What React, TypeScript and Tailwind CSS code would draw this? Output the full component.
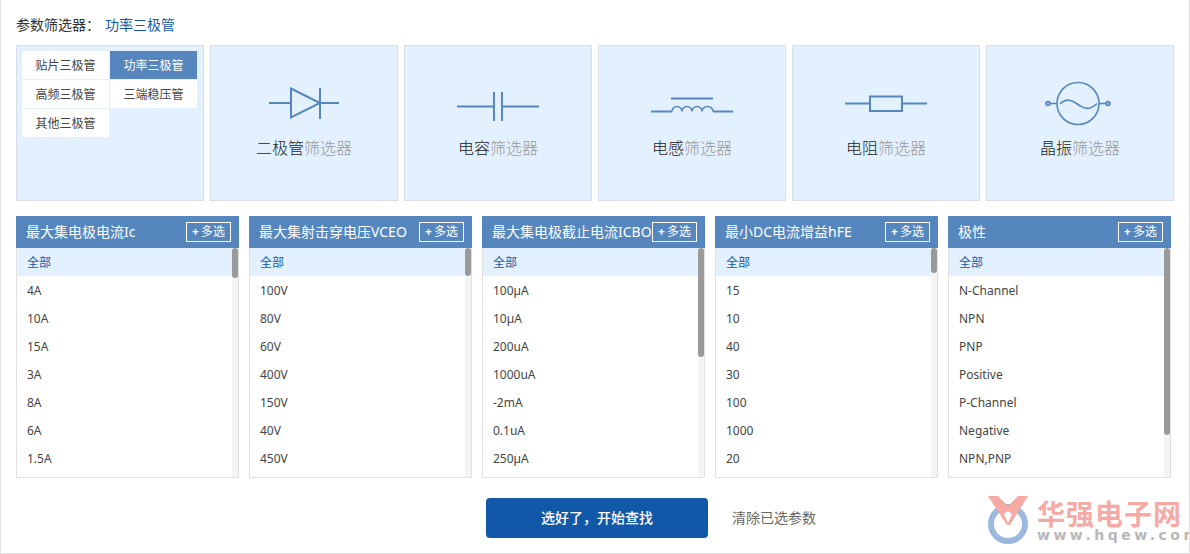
const subTypes = ['贴片三极管', '功率三极管', '高频三极管', '三端稳压管', '其他三极管'];

const filters = [
  { title: '最大集电极电流Ic', thumb: 'h-[30px]', items: ['4A', '10A', '15A', '3A', '8A', '6A', '1.5A'] },
  { title: '最大集射击穿电压VCEO', thumb: 'h-[28px]', items: ['100V', '80V', '60V', '400V', '150V', '40V', '450V'] },
  { title: '最大集电极截止电流ICBO', thumb: 'h-[109px]', items: ['100µA', '10µA', '200uA', '1000uA', '-2mA', '0.1uA', '250µA'] },
  { title: '最小DC电流增益hFE', thumb: 'h-[25px]', items: ['15', '10', '40', '30', '100', '1000', '20'] },
  { title: '极性', thumb: 'h-[187px]', items: ['N-Channel', 'NPN', 'PNP', 'Positive', 'P-Channel', 'Negative', 'NPN,PNP'] },
];

function Diode() {
  return (
    <g fill="none" stroke="#5586be" strokeWidth="2">
      <path d="M58 27H80" />
      <path d="M80 12.5L109 27L80 41.5Z" />
      <path d="M109 12V43" />
      <path d="M109 27H128" />
    </g>
  );
}

function Capacitor() {
  return (
    <g fill="none" stroke="#5586be" strokeWidth="2">
      <path d="M52 30.5H89" />
      <path d="M89 16V45" />
      <path d="M97 16V45" />
      <path d="M97 30.5H134" />
    </g>
  );
}

function Inductor() {
  return (
    <g fill="none" stroke="#5586be" strokeWidth="2">
      <path d="M52 35.5H73" />
      <path d="M72 22.5H114" />
      <path d="M73 35.5a5 5 0 0 1 10 0a5 5 0 0 1 10 0a5 5 0 0 1 10 0a5.5 5 0 0 1 11 0" strokeWidth="1.6" />
      <path d="M114 35.5H134" />
    </g>
  );
}

function Resistor() {
  return (
    <g fill="none" stroke="#5586be" strokeWidth="2">
      <path d="M52 27.5H77" />
      <rect x="77" y="20.5" width="32" height="14.5" />
      <path d="M109 27.5H134" />
    </g>
  );
}

function Crystal() {
  return (
    <g fill="none" stroke="#5586be" strokeWidth="1.6">
      <circle cx="91" cy="27.5" r="21" />
      <circle cx="61" cy="27.5" r="2" fill="#5586be" fillOpacity="0.5" />
      <circle cx="121" cy="27.5" r="2" fill="#5586be" fillOpacity="0.5" />
      <path d="M63 27.5H70" />
      <path d="M112 27.5H119" />
      <path d="M73 28c5-5 10-5 15-1.500s10 7 15 5.500c3-1 5-2.500 7-4.500" />
    </g>
  );
}

const tiles = [
  { name: '二极管', icon: <Diode /> },
  { name: '电容', icon: <Capacitor /> },
  { name: '电感', icon: <Inductor /> },
  { name: '电阻', icon: <Resistor /> },
  { name: '晶振', icon: <Crystal /> },
];

export default function App() {
  return (
    <div className="relative h-[554px] w-[1190px] overflow-hidden border-x border-b border-[#e0e0e0] bg-white pl-[15px] font-['Noto_Sans','Noto_Sans_CJK_SC',sans-serif] text-[#333]">
      {/* Heading */}
      <div className="flex h-[45px] items-center pt-[4px] text-[14px]">
        <span>参数筛选器：</span>
        <span className="ml-[5px] text-[#1258a8]">功率三极管</span>
      </div>

      {/* Category tiles */}
      <div className="flex gap-[6px]">
        <div className="h-[156px] w-[188px] border border-[#d8dfe8] bg-[#e3f1ff] p-[5px]">
          <div className="grid grid-cols-[87px_87px] gap-px">
            {subTypes.map((s) => (
              <div
                key={s}
                className={
                  s === '功率三极管'
                    ? 'flex h-[28px] items-center justify-center bg-[#5586be] pt-[2px] text-[12px] text-white'
                    : 'flex h-[28px] items-center justify-center bg-white pt-[2px] text-[12px] text-[#444]'
                }
              >
                {s}
              </div>
            ))}
          </div>
        </div>
        {tiles.map((t) => (
          <div key={t.name} className="h-[156px] w-[188px] border border-[#d8dfe8] bg-[#e3f1ff] pt-[30px]">
            <svg width="186" height="60" viewBox="0 0 186 60" className="block">
              {t.icon}
            </svg>
            <div className="text-center text-[16px] font-light leading-6">
              <span className="text-[#222]">{t.name}</span>
              <span className="text-[#999]">筛选器</span>
            </div>
          </div>
        ))}
      </div>

      {/* Parameter columns */}
      <div className="mt-[15px] flex gap-[10px]">
        {filters.map((f) => (
          <div key={f.title} className="w-[223px]">
            <div className="flex h-[32px] items-center justify-between bg-[#5586be] pl-[10px] pr-[8px] text-white">
              <span className="whitespace-nowrap text-[14px] leading-5">{f.title}</span>
              <span className="flex h-[20px] w-[45px] shrink-0 items-center justify-center gap-[2px] border border-white text-[12px] leading-none">
                <span className="text-[12px] font-bold">+</span>多选
              </span>
            </div>
            <div className="flex h-[230px] border-x border-b border-[#e0e0e0]">
              <div className="min-w-0 flex-1 overflow-hidden">
                <div className="flex h-[28px] items-center bg-[#e3f1ff] pl-[10px] pt-[2px] text-[12px] text-[#1258a8]">全部</div>
                {f.items.map((item) => (
                  <div key={item} className="flex h-[28px] items-center pl-[10px] pt-[2px] text-[12px] text-[#444]">
                    {item}
                  </div>
                ))}
              </div>
              <div className="w-[6px] bg-[#f4f4f4]">
                <div className={`${f.thumb} w-[6px] rounded-[3px] bg-[#9a9a9a]`} />
              </div>
            </div>
          </div>
        ))}
      </div>

      {/* Actions */}
      <div className="mt-[20px] flex items-center">
        <button className="ml-[470px] h-[40px] w-[222px] rounded bg-[#1258a8] pb-[2px] text-[14px] font-medium text-white">
          选好了，开始查找
        </button>
        <span className="ml-[24px] pb-[2px] text-[14px] text-[#666]">清除已选参数</span>
      </div>

      {/* Watermark logo */}
      <div className="absolute bottom-[4px] left-[986px] flex w-[203px] items-start gap-[6px]">
        <svg width="44" height="50" viewBox="0 0 44 50" className="mb-[4px] block shrink-0">
          <circle cx="21" cy="29" r="17" fill="none" stroke="#9cb8dc" strokeWidth="6" />
          <path d="M21 43V49" stroke="#9cb8dc" strokeWidth="6" />
          <path d="M1 1H11L21 11L31 1H41L23 30H20Z" fill="#f5aaa6" />
          <path d="M21 16L17 19L21 28L25 19Z" fill="#ffffff" />
        </svg>
        <div className="mt-[5px] flex flex-col">
          <span className="whitespace-nowrap text-[28px] font-bold leading-[28px] tracking-[1px] text-[#f5aaa6]">华强电子网</span>
          <span className="-mt-[1px] whitespace-nowrap font-['DejaVu_Sans',sans-serif] text-[14px] font-bold leading-[16px] tracking-[3.500px] text-[#b8b8b8]">www.hqew.com</span>
        </div>
      </div>
    </div>
  );
}
